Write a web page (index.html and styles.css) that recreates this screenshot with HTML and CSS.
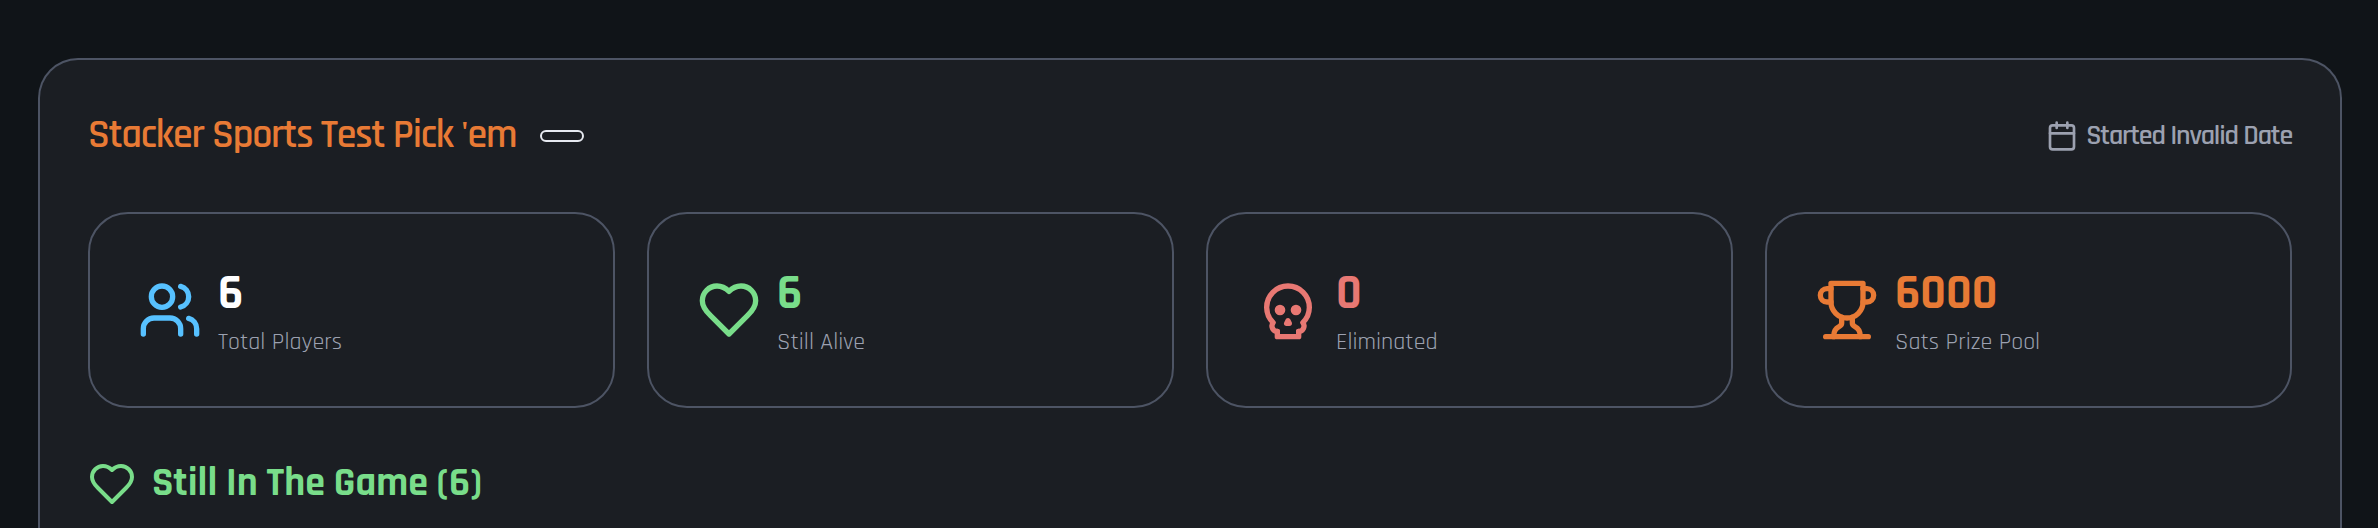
FILE: index.html
```
<!DOCTYPE html>
<html lang="en">
<head>
  <meta charset="UTF-8" />
  <title>Stacker Sports Test Pick 'em</title>
  <link rel="stylesheet" href="styles.css">
</head>
<body>

<div class="panel">
  <div class="header">
    <div class="title-row">
      <h1>Stacker Sports Test Pick 'em</h1>
      <span class="badge"></span>
    </div>
    <div class="started">
      <svg class="icon icon-sm" viewBox="0 0 24 24">
        <path d="M8 2v4M16 2v4M3 10h18" />
        <rect x="3" y="4" width="18" height="18" rx="2" />
      </svg>
      <span>Started Invalid Date</span>
    </div>
  </div>

  <div class="stats">
    <div class="card">
      <svg class="icon blue" viewBox="0 0 24 24">
        <path d="M16 21v-2a4 4 0 0 0-4-4H6a4 4 0 0 0-4 4v2" />
        <circle cx="9" cy="7" r="4" />
        <path d="M22 21v-2a4 4 0 0 0-3-3.87" />
        <path d="M16 3.13a4 4 0 0 1 0 7.75" />
      </svg>
      <div>
        <div class="value">6</div>
        <div class="label">Total Players</div>
      </div>
    </div>

    <div class="card">
      <svg class="icon green" viewBox="0 0 24 24">
        <path d="M19 14c1.49-1.46 3-3.21 3-5.5A5.5 5.5 0 0 0 16.5 3c-1.76 0-3 .5-4.5 2-1.5-1.5-2.74-2-4.5-2A5.5 5.5 0 0 0 2 8.5c0 2.3 1.5 4.05 3 5.5l7 7Z" />
      </svg>
      <div>
        <div class="value green">6</div>
        <div class="label">Still Alive</div>
      </div>
    </div>

    <div class="card">
      <svg class="icon red" viewBox="0 0 24 24">
        <circle cx="9" cy="12" r="1" />
        <circle cx="15" cy="12" r="1" />
        <path d="M8 20v2h8v-2" />
        <path d="m12.5 17-.5-1-.5 1h1z" />
        <path d="M16 20a2 2 0 0 0 1.56-3.25 8 8 0 1 0-11.12 0A2 2 0 0 0 8 20" />
      </svg>
      <div>
        <div class="value red">0</div>
        <div class="label">Eliminated</div>
      </div>
    </div>

    <div class="card">
      <svg class="icon orange" viewBox="0 0 24 24">
        <path d="M6 9H4.5a2.5 2.5 0 0 1 0-5H6" />
        <path d="M18 9h1.5a2.5 2.5 0 0 0 0-5H18" />
        <path d="M4 22h16" />
        <path d="M10 14.66V17c0 .55-.47.98-.97 1.21C7.85 18.75 7 20.24 7 22" />
        <path d="M14 14.66V17c0 .55.47.98.97 1.21C16.15 18.75 17 20.24 17 22" />
        <path d="M18 2H6v7a6 6 0 0 0 12 0V2Z" />
      </svg>
      <div>
        <div class="value orange">6000</div>
        <div class="label">Sats Prize Pool</div>
      </div>
    </div>
  </div>

  <div class="section-title green">
    <svg class="icon icon-md" viewBox="0 0 24 24">
      <path d="M19 14c1.49-1.46 3-3.21 3-5.5A5.5 5.5 0 0 0 16.5 3c-1.76 0-3 .5-4.5 2-1.5-1.5-2.74-2-4.5-2A5.5 5.5 0 0 0 2 8.5c0 2.3 1.5 4.05 3 5.5l7 7Z" />
    </svg>
    <h2>Still In The Game (6)</h2>
  </div>
</div>

</body>
</html>
```

FILE: styles.css
```
* {
  box-sizing: border-box;
}

body {
  margin: 0;
  height: 100vh;
  padding: 58px 36px 0 38px;
  background: #101418;
  color: #fff;
  font-family: Rajdhani, Roboto, sans-serif;
}

.panel {
  height: 100%;
  padding: 48px 48px 0;
  background: #1b1e23;
  border: 2px solid #4d5464;
  border-bottom: none;
  border-radius: 40px 40px 0 0;
}

.header {
  display: flex;
  align-items: center;
  justify-content: space-between;
  height: 56px;
  margin-bottom: 48px;
}

.title-row {
  display: flex;
  align-items: center;
  gap: 24px;
}

h1, h2 {
  margin: 0;
  font-size: 40px;
  line-height: 56px;
  white-space: nowrap;
}

h1 {
  font-weight: 600;
  letter-spacing: -1.2px;
  color: #e87a35;
}

h2 {
  font-weight: 700;
}

.badge {
  width: 44px;
  height: 12px;
  border: 2px solid #e6e9f0;
  border-radius: 6px;
}

.started {
  display: flex;
  align-items: center;
  gap: 8px;
  font-size: 28px;
  font-weight: 600;
  letter-spacing: -1.2px;
  color: #9ca1b0;
}

/* Icons */
.icon {
  flex: none;
  width: 64px;
  height: 64px;
  fill: none;
  stroke: currentColor;
  stroke-width: 2;
  stroke-linecap: round;
  stroke-linejoin: round;
}

.icon-sm {
  width: 32px;
  height: 32px;
}

.icon-md {
  width: 48px;
  height: 48px;
}

/* Stat cards */
.stats {
  display: grid;
  grid-template-columns: repeat(4, 1fr);
  gap: 32px;
}

.card {
  display: flex;
  align-items: center;
  gap: 16px;
  height: 196px;
  padding: 0 48px;
  border: 2px solid #4d5464;
  border-radius: 40px;
}

.value {
  font-size: 48px;
  font-weight: 700;
  line-height: 64px;
}

.label {
  font-size: 24px;
  font-weight: 400;
  line-height: 32px;
  color: #9ca1b0;
}

.section-title {
  display: flex;
  align-items: center;
  gap: 16px;
  height: 56px;
  margin-top: 48px;
}

.blue {
  color: #57c1ff;
}

.green {
  color: #79dd8a;
}

.red {
  color: #e87873;
}

.orange {
  color: #e87a35;
}
```
